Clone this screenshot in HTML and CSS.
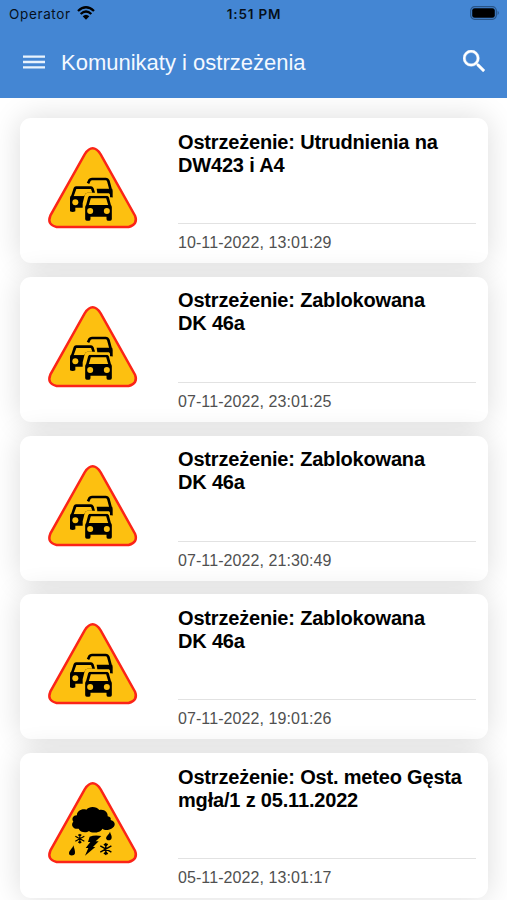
FILE: index.html
```
<!DOCTYPE html>
<html lang="pl">
<head>
    <meta charset="UTF-8">
    <meta name="viewport" content="width=device-width, initial-scale=1.0">
    <title>Komunikaty i ostrzeżenia</title>
    <link rel="stylesheet" href="styles.css">
</head>
<body>
    <svg class="symbols" aria-hidden="true">
        <symbol id="triangle" viewBox="0 0 315 285">
            <path d="M134 43 Q158 7 182 43 L285 227 Q295 253 266 261 L50 261 Q20 254 31 227 Z" fill="#fdc010" stroke="#fb2418" stroke-width="7.5"/>
        </symbol>
        <symbol id="car" viewBox="0 0 80 76">
            <path d="M14 0 H65 Q69 0 71 5 L77 27 Q80 30 80 35 V70 Q80 75 75 75 H68 Q64 75 64 70 V63 H16 V70 Q16 75 12 75 H5 Q0 75 0 70 V35 Q0 30 3 27 L9 5 Q11 0 14 0 Z"/>
            <path d="M17 8 H63 L69 28 H11 Z" fill="#fdc010"/>
            <circle cx="15" cy="46" r="9" fill="#fdc010"/>
            <circle cx="65" cy="46" r="9" fill="#fdc010"/>
        </symbol>
        <symbol id="traffic" viewBox="0 0 315 285">
            <use href="#triangle"/>
            <path d="M144 130 L149 120 Q151 117 156 117 H197 Q203 117 205 123 L211 145 Q214 148 214 153 V172" fill="none" stroke="#000" stroke-width="8"/>
            <path d="M170 146 H213 L217 174 L207 160 H172 Z"/>
            <path d="M90 214 V174 Q90 169 94 166 L101 144 Q103 139 108 139 H153 Q158 139 161 145 L165 158 H142 Q136 158 134 166 L128 190 V203 H106 V214 Q98 218 90 214 Z"/>
            <path d="M109 147 H153 L157 158 H142 Q136 158 134 166 L132 169 H101 Z" fill="#fdc010"/>
            <path d="M132 169 H100 L98 174 H131 Z"/>
            <circle cx="106" cy="187" r="9" fill="#fdc010"/>
            <use href="#car" x="135" y="167" width="81" height="76"/>
        </symbol>
        <symbol id="flake" viewBox="-10 -10 20 20">
            <path d="M0 -10 V10 M-9 -5 L9 5 M-9 5 L9 -5 M-3 -8 L0 -5 L3 -8 M-3 8 L0 5 L3 8" fill="none" stroke="#000" stroke-width="2.4"/>
        </symbol>
        <symbol id="weather" viewBox="0 0 315 285">
            <use href="#triangle"/>
            <path d="M116 161 C99 164 91 149 100 140 C93 130 101 120 111 121 C109 108 127 99 139 104 C148 93 170 94 178 105 C194 102 204 112 203 124 C210 125 214 130 212 135 C229 139 227 156 214 161 C203 167 193 166 187 161 C181 175 154 175 147 168 C138 175 120 172 116 161 Z"/>
            <use href="#flake" x="103" y="176" width="33" height="30"/>
            <use href="#flake" x="179" y="203" width="37" height="38"/>
            <path d="M149 185 Q164 179 184 183 L167 199 H176 L159 216 H166 L135 242 L145 219 H137 L151 201 H144 Z"/>
            <path d="M100 211 C98 221 88 225 87 235 C87 244 103 244 105 235 C106 226 102 220 100 211 Z"/>
            <path d="M210 170 C208 178 199 182 198 189 C199 199 214 198 215 188 C216 180 211 177 210 170 Z"/>
        </symbol>
    </svg>

    <header class="header">
        <div class="status">
            <div class="carrier">
                <span>Operator</span>
                <svg class="wifi" viewBox="0 0 54 42">
                    <path d="M3 15 Q27 -7 51 15 M11 24 Q27 9 43 24" fill="none" stroke="#000" stroke-width="7"/>
                    <path d="M17 31 Q27 22 37 31 L27 41 Z"/>
                </svg>
            </div>
            <div class="time">1:51 PM</div>
            <svg class="battery" viewBox="0 0 30 14">
                <rect x="0.7" y="0.7" width="25.6" height="12.6" rx="4" fill="none" stroke="#285487" stroke-width="1.2"/>
                <rect x="2.2" y="2.2" width="22.6" height="9.6" rx="2.4"/>
                <path d="M27.6 4.8 Q30 7 27.6 9.2 Z" fill="#285487"/>
            </svg>
        </div>
        <div class="toolbar">
            <svg class="menu" viewBox="0 0 24 14">
                <path d="M1 1.6 H23 M1 7 H23 M1 12.4 H23" stroke="#e9f3fd" stroke-width="2.4"/>
            </svg>
            <h1 class="title">Komunikaty i ostrzeżenia</h1>
            <svg class="search" viewBox="3 3 17.5 17.5">
                <path fill="#fff" stroke="#fff" stroke-width="0.3" d="M15.5 14h-.79l-.28-.27A6.471 6.471 0 0 0 16 9.5 6.5 6.5 0 1 0 9.5 16c1.61 0 3.09-.59 4.23-1.57l.27.28v.79l5 4.99L20.49 19l-4.99-5zm-6 0C7.01 14 5 11.99 5 9.5S7.01 5 9.5 5 14 7.01 14 9.5 11.99 14 9.5 14z"/>
            </svg>
        </div>
    </header>

    <main class="list">
        <article class="card">
            <svg class="sign"><use href="#traffic"/></svg>
            <div class="content">
                <h2 class="name">Ostrzeżenie: Utrudnienia na<br>DW423 i A4</h2>
                <div class="date">10-11-2022, 13:01:29</div>
            </div>
        </article>
        <article class="card">
            <svg class="sign"><use href="#traffic"/></svg>
            <div class="content">
                <h2 class="name">Ostrzeżenie: Zablokowana<br>DK 46a</h2>
                <div class="date">07-11-2022, 23:01:25</div>
            </div>
        </article>
        <article class="card">
            <svg class="sign"><use href="#traffic"/></svg>
            <div class="content">
                <h2 class="name">Ostrzeżenie: Zablokowana<br>DK 46a</h2>
                <div class="date">07-11-2022, 21:30:49</div>
            </div>
        </article>
        <article class="card">
            <svg class="sign"><use href="#traffic"/></svg>
            <div class="content">
                <h2 class="name">Ostrzeżenie: Zablokowana<br>DK 46a</h2>
                <div class="date">07-11-2022, 19:01:26</div>
            </div>
        </article>
        <article class="card">
            <svg class="sign"><use href="#weather"/></svg>
            <div class="content">
                <h2 class="name">Ostrzeżenie: Ost. meteo Gęsta<br>mgła/1 z 05.11.2022</h2>
                <div class="date">05-11-2022, 13:01:17</div>
            </div>
        </article>
    </main>
</body>
</html>
```

FILE: styles.css
```
* {
    box-sizing: border-box;
}
body {
    font-family: "Liberation Sans", Arial, sans-serif;
    display: flex;
    flex-direction: column;
    height: 100vh;
    margin: 0;
    background-color: #fff;
    overflow: hidden;
}
.symbols {
    display: none;
}
.header {
    flex: none;
    height: 98px;
    background-color: #4486d3;
}
.status {
    display: grid;
    grid-template-columns: 1fr auto 1fr;
    align-items: center;
    height: 27px;
    padding: 0 7px 0 9px;
    font-family: Inter, sans-serif;
    font-size: 13.5px;
    color: #06101c;
}
.carrier {
    display: flex;
    align-items: center;
    gap: 6px;
    letter-spacing: 0.65px;
}
.wifi {
    width: 18px;
    height: 14px;
    margin-top: -2px;
}
.time {
    margin-right: 1px;
    font-weight: 600;
    letter-spacing: 0.8px;
}
.battery {
    justify-self: end;
    width: 30px;
    height: 14px;
    margin-top: -1px;
}
.toolbar {
    display: flex;
    align-items: center;
    height: 70px;
    padding: 0 22px;
}
.menu {
    width: 24px;
    height: 14px;
}
.title {
    flex: 1;
    margin: 1px 0 0 15px;
    font-size: 22px;
    font-weight: normal;
    color: #f4f9ff;
}
.search {
    width: 22px;
    height: 22px;
    margin-top: -3px;
}
.list {
    flex: 1;
    display: flex;
    flex-direction: column;
    gap: 13.75px;
    padding: 20px 19px 0 20px;
    overflow: hidden;
}
.card {
    flex: none;
    display: flex;
    height: 145px;
    padding: 12px 12px 0 20px;
    border-radius: 11px;
    background-color: #fff;
    box-shadow: 0 0 30px rgba(0, 0, 0, 0.14);
}
.sign {
    flex: none;
    width: 105px;
    height: 95px;
    margin: 10px 33px 0 0;
}
.content {
    flex: 1;
}
.name {
    height: 94px;
    margin: 0;
    padding-top: 0.6px;
    border-bottom: 1px solid #e2e2e2;
    font-size: 20px;
    line-height: 23px;
    letter-spacing: -0.18px;
    white-space: nowrap;
    color: #000;
}
.date {
    margin-top: 9px;
    font-size: 16px;
    line-height: 20px;
    letter-spacing: 0.08px;
    color: #505050;
}
```
